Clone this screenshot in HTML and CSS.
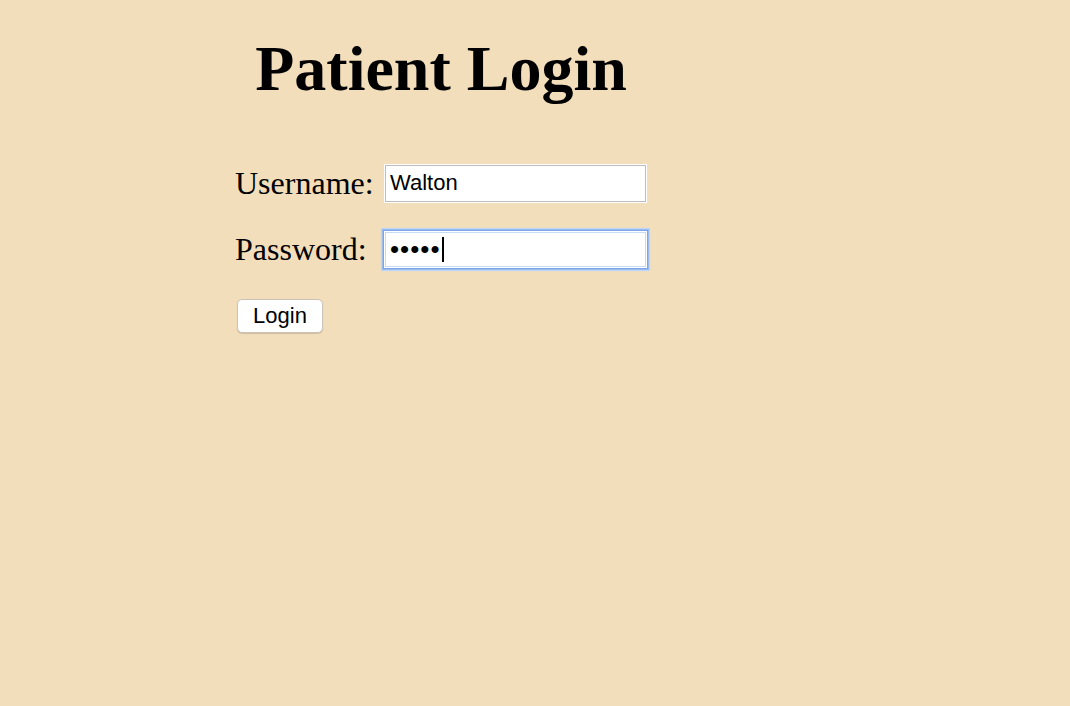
FILE: index.html
```html
<!DOCTYPE html>
<html lang="en">
<head>
<meta charset="utf-8">
<title>Patient Login</title>
<link rel="stylesheet" href="styles.css">
</head>
<body>
<main class="page">
  <h1 class="title">Patient Login</h1>
  <form class="login-form">
    <div class="fields">
      <label class="label" for="username">Username:</label>
      <input class="field" id="username" type="text" value="Walton">
      <label class="label" for="password">Password:</label>
      <div class="field-wrap">
        <input class="field field-focused" id="password" type="password" value="12345">
        <span class="caret"></span>
      </div>
    </div>
    <button class="btn" type="button">Login</button>
  </form>
</main>
</body>
</html>
```

FILE: styles.css
```css
html, body {
  margin: 0;
  padding: 0;
  background: #f3debb;
  height: 100%;
}

.page {
  width: 412px;
  margin-left: 235px;
  padding-top: 29px;
  font-family: "Liberation Serif", "Times New Roman", serif;
  color: #000;
}

.title {
  margin: 0;
  text-align: center;
  font-size: 64px;
  font-weight: bold;
  line-height: 80px;
}

.login-form {
  margin-top: 55px;
  display: flex;
  flex-direction: column;
  align-items: flex-start;
}

.fields {
  display: grid;
  grid-template-columns: 150px 261px;
  row-gap: 28px;
  align-items: center;
}

.label {
  font-size: 32px;
  line-height: 38px;
}

.field-wrap {
  position: relative;
  display: flex;
}

.field {
  box-sizing: border-box;
  width: 261px;
  height: 37px;
  margin: 0;
  padding: 0 0 0 4px;
  border: 1px solid #bdbdbd;
  box-shadow: 0 0 0 1px #ffffff;
  background: #fff;
  font-family: "Liberation Sans", Arial, sans-serif;
  font-size: 22px;
  color: #000;
  outline: none;
}

.field-focused {
  height: 35px;
  margin-top: 1px;
  border: 1px solid #c8daf6;
  box-shadow: 0 0 0 1px #fff, 0 0 0 2px #7ba7ea, 0 0 0 3px #98bbef, 0 0 1px 4px #c3d6f2;
  letter-spacing: 1px;
  font-size: 26px;
}

.caret {
  position: absolute;
  left: 57px;
  top: 6px;
  width: 2px;
  height: 25px;
  background: #000;
}

.btn {
  margin-top: 31px;
  margin-left: 2px;
  box-sizing: border-box;
  width: 86px;
  height: 34px;
  padding: 0;
  background: #fff;
  border: 1px solid #c9c3b8;
  border-radius: 5px;
  box-shadow: 0 1px 1px rgba(0, 0, 0, 0.15);
  font-family: "Liberation Sans", Arial, sans-serif;
  font-size: 22px;
  color: #000;
}
```
